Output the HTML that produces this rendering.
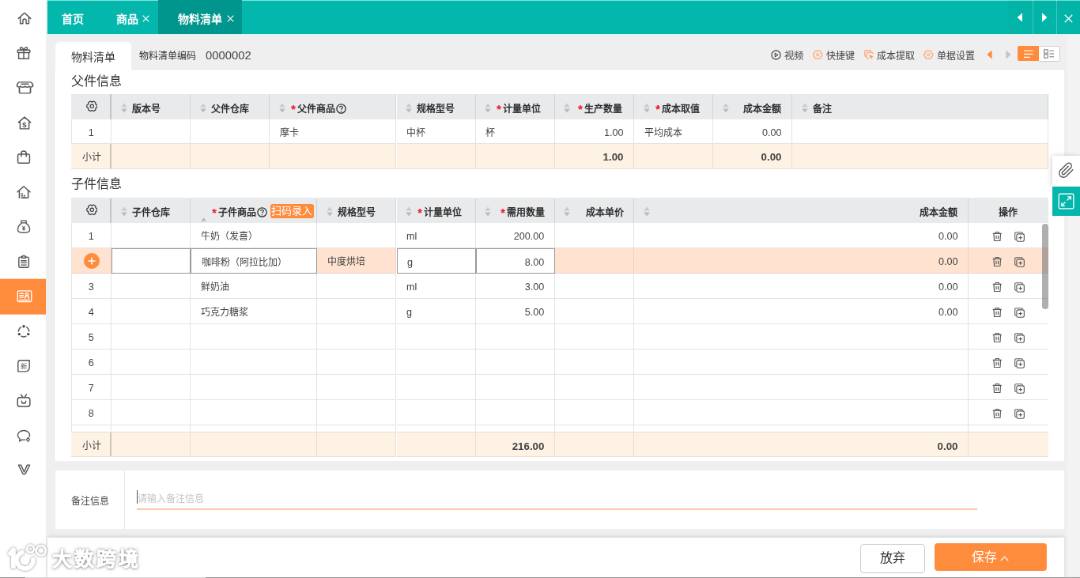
<!DOCTYPE html>
<html lang="zh-CN">
<head>
<meta charset="utf-8">
<title>物料清单</title>
<style>
*{box-sizing:border-box;margin:0;padding:0}
html,body{width:1080px;height:578px;overflow:hidden;background:#efeff0}
body{font-family:"Liberation Sans",sans-serif;font-size:12px;color:#333}
#app{position:absolute;left:0;top:0;width:1366px;height:731px;transform:scale(0.790630);transform-origin:0 0;overflow:hidden;will-change:transform}
.abs{position:absolute}
/* sidebar */
#side{position:absolute;left:0;top:0;width:58.3px;height:731px;background:#fff}
#side .it{position:absolute;left:0;width:58.3px;height:44px;transform:translateY(0.7px)}
#side .it svg{position:absolute;left:20px;top:12px;width:20px;height:20px;overflow:visible}
#side .it.on{background:#ff8b3d}
/* header */
#hdr{position:absolute;left:60px;top:0;width:1306px;height:42.5px;background:#03b7ac;border-top:1px solid #7fe3dc;box-shadow:0 1px 0 #d4f4f1,-1.4px 0 0 #d4f4f1}
#hdr .t{position:absolute;top:13px;height:20px;line-height:20px;font-size:14px;font-weight:700;color:#fff;white-space:nowrap}
#hdr .x{position:absolute;top:18px;width:9px;height:9px}
#hdr .act{position:absolute;left:140px;top:-1px;width:106px;height:42.5px;background:#00968d}
#hdr .nav{position:absolute;top:-1px;height:42.5px;border-left:1px solid rgba(255,255,255,.3)}
/* sub header */
#tab{position:absolute;left:70px;top:53px;width:96px;height:37px;background:#fff;border-radius:6px 6px 0 0;font-size:14px;line-height:20px;padding:9px 0 0 20px;color:#333}
.sub{position:absolute;white-space:nowrap;color:#333}
/* cards */
#card{position:absolute;left:70px;top:88.5px;width:1276px;height:494.8px;background:#fff}
#remark{position:absolute;left:70px;top:594.5px;width:1276px;height:74.5px;background:#fff}
#foot{position:absolute;left:60px;top:680px;width:1286px;height:51px;background:#fff;box-shadow:0 -2px 5px rgba(0,0,0,.10)}
#sbar{position:absolute;left:1350px;top:43.5px;width:17px;height:689px;background:#f3f3f3}
.c{position:absolute;overflow:hidden}
.x{position:absolute;top:1.2px;bottom:0;line-height:32px;white-space:nowrap;font-size:12px;color:#444}
.h .x{color:#2e2e2e}
.h .x{top:3px}
.w{position:absolute;left:-1.5px;right:1.5px;top:0;bottom:0}
.n{font-size:12.6px !important;color:#444;top:1.6px !important}
.ttl{position:absolute;left:20px;font-size:16px;line-height:22px;color:#333;white-space:nowrap}
</style>
</head>
<body>
<div id="app">

<div id="hdr">
  <div class="act"></div>
  <div class="t" style="left:18px">首页</div>
  <div class="t" style="left:87px">商品</div>
  <svg class="x" style="left:120px" viewBox="0 0 9 9"><path d="M0.7 0.7L8.3 8.3M8.3 0.7L0.7 8.3" stroke="#fff" stroke-width="1.2" fill="none"/></svg>
  <div class="t" style="left:165px">物料清单</div>
  <svg class="x" style="left:227px" viewBox="0 0 9 9"><path d="M0.7 0.7L8.3 8.3M8.3 0.7L0.7 8.3" stroke="#fff" stroke-width="1.2" fill="none"/></svg>
  <div class="abs" style="left:1215px;top:-1px;width:91px;height:42.5px;background:rgba(0,0,0,.02)"></div>
  <div class="nav" style="left:1246px"></div>
  <div class="nav" style="left:1276px"></div>
  <svg class="abs" style="left:1226px;top:15px;width:8px;height:12px" viewBox="0 0 8 12"><path d="M7 0.3V11.7L0.6 6Z" fill="#fff"/></svg>
  <svg class="abs" style="left:1257px;top:15px;width:8px;height:12px" viewBox="0 0 8 12"><path d="M1 0.3V11.7L7.4 6Z" fill="#fff"/></svg>
  <svg class="abs" style="left:1286px;top:17px;width:11px;height:11px" viewBox="0 0 11 11"><path d="M0.8 0.8L10.2 10.2M10.2 0.8L0.8 10.2" stroke="#fff" stroke-width="1.3" fill="none"/></svg>
</div>

<div id="side">
<div class="it" style="top:0"><svg style="left:22px;top:14px;width:18px;height:17px" viewBox="0.5 1.5 19 17" fill="none" stroke="#555" stroke-width="1.5" stroke-linecap="round" stroke-linejoin="round"><path d="M1.8 10.2L10 2.6L18.2 10.2"/><path d="M4.3 8.6V17H7.8V13A2.2 2.2 0 0 1 12.2 13V17H15.7V8.6"/></svg></div>
<div class="it" style="top:44px"><svg viewBox="0 0 20 20" fill="none" stroke="#555" stroke-width="1.4" stroke-linejoin="round"><rect x="2.2" y="6.6" width="15.6" height="3.2" rx="0.6"/><path d="M3.6 9.8V17.6H16.4V9.8M10 6.6V17.6"/><path d="M10 6.4C8.6 2.6 5.2 2.4 5.4 4.6C5.6 6.2 8.6 6.4 10 6.4C11.4 6.4 14.4 6.2 14.6 4.6C14.8 2.4 11.4 2.6 10 6.4Z"/></svg></div>
<div class="it" style="top:88px"><svg style="left:20px;top:12px;width:23px;height:20px" viewBox="0.5 0 19 20" preserveAspectRatio="none" fill="none" stroke="#555" stroke-width="1.4" stroke-linejoin="round" stroke-linecap="round"><path d="M4.6 3.2H15.4C16.6 3.2 17.2 4 17.6 5L18.4 7.4C18.4 9.6 15.4 9.9 14.6 8.4C13.8 9.9 10.8 9.9 10 8.4C9.2 9.9 6.2 9.9 5.4 8.4C4.6 9.9 1.6 9.6 1.6 7.4L2.4 5C2.8 4 3.4 3.2 4.6 3.2Z"/><path d="M6.4 5.6H13.6"/><path d="M4.2 10.4V15.6Q4.2 17.2 5.8 17.2H14.2Q15.8 17.2 15.8 15.6V10.4"/></svg></div>
<div class="it" style="top:132px"><svg style="left:20.5px;top:13px" viewBox="0 0 20 20" fill="none" stroke="#555" stroke-width="1.4" stroke-linejoin="round"><path d="M10 2.4L17.8 9.2H15.6V17.2H4.4V9.2H2.2Z"/><text x="10" y="15.2" font-size="9.5" font-weight="bold" text-anchor="middle" fill="#555" stroke="none" font-family="Liberation Sans, sans-serif">$</text></svg></div>
<div class="it" style="top:176px"><svg viewBox="0 0 20 20" fill="none" stroke="#555" stroke-width="1.5" stroke-linejoin="round" stroke-linecap="round"><rect x="2.6" y="6.4" width="14.8" height="11.2" rx="1.6"/><path d="M6.8 9.4V5.6A3.2 3.2 0 0 1 13.2 5.6V9.4"/></svg></div>
<div class="it" style="top:220px"><svg viewBox="0 0 20 20" fill="none" stroke="#555" stroke-width="1.5" stroke-linejoin="round" stroke-linecap="round"><path d="M2 10L10 3L18 10"/><path d="M4.4 8.4V17.6M15.6 8.4V17.6"/><path d="M7.4 12.4H8.2M7.4 15H8.2M10.4 15H11.2M7.4 17.5H14" stroke-width="1.7"/></svg></div>
<div class="it" style="top:264px"><svg viewBox="0 0 20 20" fill="none" stroke="#555" stroke-width="1.4" stroke-linejoin="round"><rect x="6.8" y="2.4" width="6.4" height="2.8" rx="0.7"/><path d="M7.4 5.4C3.2 8 1.8 12.6 2.8 15.4C3.5 17.3 5.4 17.6 10 17.6C14.6 17.6 16.5 17.3 17.2 15.4C18.2 12.6 16.8 8 12.6 5.4"/><path d="M8.2 9L10 11.4L11.8 9M10 11.4V15M8.2 11.8H11.8M8.2 13.4H11.8" stroke-width="1"/></svg></div>
<div class="it" style="top:308px"><svg viewBox="0 0 20 20" fill="none" stroke="#555" stroke-width="1.4" stroke-linejoin="round" stroke-linecap="round"><path d="M7.4 4.4H5.4Q3.8 4.4 3.8 6V16Q3.8 17.6 5.4 17.6H14.6Q16.2 17.6 16.2 16V6Q16.2 4.4 14.6 4.4H12.6"/><path d="M7.4 5.6V3.6H8.8A1.2 1.2 0 0 1 11.2 3.6H12.6V5.6Z"/><path d="M6.8 9H13.2M6.8 11.7H13.2M6.8 14.4H13.2"/></svg></div>
<div class="it on" style="top:352px;height:44.7px"><svg style="left:20.8px" viewBox="0 0 20 20" fill="none" stroke="#fff" stroke-width="1.4" stroke-linejoin="round" stroke-linecap="round"><rect x="1.2" y="3.2" width="17.6" height="13.6" rx="1.4"/><path d="M3.6 14.6H16.4" stroke-width="1.2"/><path d="M4 6.6H8.4M4 9H8.4M4 11.4H8.4"/><circle cx="13" cy="7.4" r="1.7"/><path d="M10.6 12.6V12A2.4 2.4 0 0 1 15.4 12V12.6"/></svg></div>
<div class="it" style="top:396px"><svg viewBox="0 0 20 20" fill="none" stroke="#555" stroke-width="1.4" stroke-linecap="round"><path d="M13.59 5.06A6.6 6.6 0 0 1 16.59 10.25"/><path d="M13 16.48A6.6 6.6 0 0 1 7 16.48"/><path d="M3.41 10.25A6.6 6.6 0 0 1 6.41 5.06"/><circle cx="10" cy="4" r="1.7" fill="#444" stroke="none"/><circle cx="4.3" cy="13.9" r="1.7" fill="#444" stroke="none"/><circle cx="15.7" cy="13.9" r="1.7" fill="#444" stroke="none"/></svg></div>
<div class="it" style="top:440px"><svg viewBox="0 0 20 20" fill="none" stroke="#555" stroke-width="1.4" stroke-linejoin="round"><path d="M5.6 3H17.2V11C17.2 15 14.8 17.2 11.2 17.2H2.8V5.8Q2.8 3 5.6 3Z"/><text x="10" y="13.4" font-size="8.5" text-anchor="middle" fill="#555" stroke="none" font-family="Liberation Sans, sans-serif">新</text></svg></div>
<div class="it" style="top:484px"><svg viewBox="0 0 20 20" fill="none" stroke="#555" stroke-width="1.5" stroke-linejoin="round" stroke-linecap="round"><rect x="2.2" y="6" width="15.6" height="11.6" rx="3"/><path d="M6.6 2.4L8.8 5.8M13.4 2.4L11.2 5.8"/><path d="M7.4 10.4V11.4C7.4 14.4 12.6 14.4 12.6 11.4V10.4" stroke-width="1.3"/></svg></div>
<div class="it" style="top:528px"><svg style="top:13px" viewBox="0 0 20 20" fill="none" stroke="#555" stroke-width="1.4" stroke-linejoin="round"><path d="M12.2 14.4C11.5 14.6 10.8 14.7 10 14.7C9.3 14.7 8.6 14.6 8 14.5L4.6 16.2L5.2 13.4C3.4 12.2 2.4 10.6 2.4 8.8C2.4 5.4 5.8 2.8 10 2.8C14.2 2.8 17.6 5.4 17.6 8.8C17.6 9.6 17.4 10.4 17 11.1"/><path d="M15.4 11.6L17.4 14.2L15.4 16.8L13.4 14.2Z" stroke-width="1.2"/></svg></div>
<div class="it" style="top:572px"><svg style="left:21.5px;top:12.2px;width:17px;height:17px" viewBox="0 0 20 20" fill="none" stroke="#555" stroke-width="1.6" stroke-linejoin="round"><path d="M1.6 4H5.4L10 14.4L14.6 4H18.4L11.6 17.6H8.4Z"/></svg></div>

</div>

<div id="tab">物料清单</div>
<div class="sub" style="left:176px;top:61px;font-size:12px;line-height:20px">物料清单编码</div>
<div class="sub" style="left:260px;top:59.5px;font-size:14.8px;line-height:20px;color:#444">0000002</div>
<svg class="abs" style="left:975.3px;top:63.4px;width:13px;height:13px" viewBox="0 0 13 13"><circle cx="6.5" cy="6.5" r="5.6" fill="none" stroke="#333" stroke-width="1.1"/><path d="M5.2 4.1V8.9L9.1 6.5Z" fill="none" stroke="#333" stroke-width="1" stroke-linejoin="round"/></svg>
<div class="sub" style="color:#444;left:991.5px;top:61px;font-size:12.3px;line-height:20px">视频</div>
<svg class="abs" style="left:1028px;top:63px;width:12.5px;height:12.5px" viewBox="0 0 14 14"><path d="M13.14 5.58 L13.14 8.42 L11.33 9.50 L11.30 11.61 L8.84 13.02 L7.00 12.00 L5.16 13.02 L2.70 11.61 L2.67 9.50 L0.86 8.42 L0.86 5.58 L2.67 4.50 L2.70 2.39 L5.16 0.98 L7.00 2.00 L8.84 0.98 L11.30 2.39 L11.33 4.50Z" fill="none" stroke="#ffb185" stroke-width="1.6" stroke-linejoin="round"/><circle cx="7" cy="7" r="1.7" fill="none" stroke="#ffb185" stroke-width="1.4"/></svg>
<div class="sub" style="color:#444;left:1045px;top:61px;font-size:12px;line-height:20px">快捷键</div>
<svg class="abs" style="left:1093px;top:63px;width:11.5px;height:12px" viewBox="0 0 12 12.5" fill="none" stroke="#ffb185" stroke-width="1.5" stroke-linejoin="round"><path d="M3 8.6H1.9Q0.8 8.6 0.8 7.5V1.9Q0.8 0.8 1.9 0.8H7.9Q9 0.8 9 1.9V2.6"/><path d="M6 11.4H4.6Q3.4 11.4 3.4 10.2V4.6Q3.4 3.4 4.6 3.4H10.2Q11.4 3.4 11.4 4.6V5.6"/><path d="M7 7L11.6 9L9.8 9.8L9 11.6Z" fill="#ff9a56" stroke="#ff9a56" stroke-width="0.9"/></svg>
<div class="sub" style="color:#444;left:1109px;top:61px;font-size:12px;line-height:20px">成本提取</div>
<svg class="abs" style="left:1168px;top:63px;width:12.5px;height:12.5px" viewBox="0 0 14 14"><path d="M13.14 5.58 L13.14 8.42 L11.33 9.50 L11.30 11.61 L8.84 13.02 L7.00 12.00 L5.16 13.02 L2.70 11.61 L2.67 9.50 L0.86 8.42 L0.86 5.58 L2.67 4.50 L2.70 2.39 L5.16 0.98 L7.00 2.00 L8.84 0.98 L11.30 2.39 L11.33 4.50Z" fill="none" stroke="#ffb185" stroke-width="1.6" stroke-linejoin="round"/><circle cx="7" cy="7" r="1.7" fill="none" stroke="#ffb185" stroke-width="1.4"/></svg>
<div class="sub" style="color:#444;left:1185px;top:61px;font-size:12px;line-height:20px">单据设置</div>
<svg class="abs" style="left:1248px;top:63px;width:7px;height:12px" viewBox="0 0 7 12"><path d="M6.6 0.4V11.6L0.4 6Z" fill="#ff8b3d"/></svg>
<svg class="abs" style="left:1272px;top:63px;width:7px;height:12px" viewBox="0 0 7 12"><path d="M0.4 0.4V11.6L6.6 6Z" fill="#c4c4c4"/></svg>
<div class="abs" style="left:1287px;top:58px;width:27px;height:19px;background:#ff8b3d;border-radius:2px 0 0 2px"></div>
<svg class="abs" style="left:1294px;top:62.5px;width:13px;height:11px" viewBox="0 0 13 11"><path d="M1 1.2H12.5M1 5.3H12.5M1 9.4H8.6" stroke="#fff" stroke-width="1.3"/></svg>
<div class="abs" style="left:1314px;top:57.5px;width:26.5px;height:20.5px;background:#fff;border:1px solid #cdcdcd;border-left:none;border-radius:0 2px 2px 0"></div>
<svg class="abs" style="left:1320px;top:61.5px;width:14px;height:12px" viewBox="0 0 14 12" fill="none" stroke="#777" stroke-width="1"><rect x="0.6" y="0.8" width="4.6" height="4.4"/><rect x="0.6" y="6.8" width="4.6" height="4.4"/><path d="M7.4 2.2H13M7.4 6H13M7.4 9.8H13"/></svg>


<div id="card">
  <div class="ttl" style="top:3px">父件信息</div>
<div class="c h" style="left:20px;top:30.5px;width:51.3px;height:31.5px;background:#e8eaec;"><svg class="abs" style="left:18.5px;top:8px;width:14.6px;height:14.6px" viewBox="0 0 14 14"><path d="M13.14 5.58 L13.14 8.42 L11.33 9.50 L11.30 11.61 L8.84 13.02 L7.00 12.00 L5.16 13.02 L2.70 11.61 L2.67 9.50 L0.86 8.42 L0.86 5.58 L2.67 4.50 L2.70 2.39 L5.16 0.98 L7.00 2.00 L8.84 0.98 L11.30 2.39 L11.33 4.50Z" fill="none" stroke="#3a3a3a" stroke-width="1.2" stroke-linejoin="round"/><circle cx="7" cy="7" r="2.1" fill="none" stroke="#3a3a3a" stroke-width="1.1"/></svg><span class="abs" style="left:48.7px;top:0;bottom:0;width:2.6px;background:#c2c4c8"></span></div>
<div class="c h" style="left:71.3px;top:30.5px;width:100px;height:31.5px;background:#e8eaec;border-right:1px solid #d3d5d8;"><div class="w"><svg class="abs" style="left:13px;top:11px;width:8px;height:13px" viewBox="0 0 8 13"><path d="M4 0.6L7.7 5.4H0.3Z" fill="#c9cbcf"/><path d="M4 12.4L7.7 7.6H0.3Z" fill="#b9bcc1"/></svg><span class="x" style="left:27px;font-weight:bold;">版本号</span></div></div>
<div class="c h" style="left:171.3px;top:30.5px;width:100px;height:31.5px;background:#e8eaec;border-right:1px solid #d3d5d8;"><div class="w"><svg class="abs" style="left:13px;top:11px;width:8px;height:13px" viewBox="0 0 8 13"><path d="M4 0.6L7.7 5.4H0.3Z" fill="#c9cbcf"/><path d="M4 12.4L7.7 7.6H0.3Z" fill="#b9bcc1"/></svg><span class="x" style="left:27px;font-weight:bold;">父件仓库</span></div></div>
<div class="c h" style="left:271.3px;top:30.5px;width:160.2px;height:31.5px;background:#e8eaec;border-right:1px solid #d3d5d8;"><div class="w"><svg class="abs" style="left:13px;top:11px;width:8px;height:13px" viewBox="0 0 8 13"><path d="M4 0.6L7.7 5.4H0.3Z" fill="#c9cbcf"/><path d="M4 12.4L7.7 7.6H0.3Z" fill="#b9bcc1"/></svg><svg class="abs" style="left:27px;top:13px;width:8px;height:8px" viewBox="0 0 8 8"><path d="M4.00 3.90L4.00 1.00M4.00 3.90L6.76 3.00M4.00 3.90L5.70 6.25M4.00 3.90L2.30 6.25M4.00 3.90L1.24 3.00" stroke="#f5222d" stroke-width="1.6" fill="none"/></svg><span class="x" style="left:36px;font-weight:bold;">父件商品</span><svg class="abs" style="left:85px;top:12px;width:13px;height:13px" viewBox="0 0 12 12"><circle cx="6" cy="6" r="5.2" fill="none" stroke="#333" stroke-width="1.2"/><path d="M4.3 4.7C4.3 3.6 5 3 6 3C7 3 7.7 3.6 7.7 4.5C7.7 5.6 6 5.8 6 7.2" fill="none" stroke="#333" stroke-width="1.1"/><circle cx="6" cy="9" r="0.7" fill="#333"/></svg></div></div>
<div class="c h" style="left:431.5px;top:30.5px;width:100.2px;height:31.5px;background:#e8eaec;border-right:1px solid #d3d5d8;"><div class="w"><svg class="abs" style="left:13px;top:11px;width:8px;height:13px" viewBox="0 0 8 13"><path d="M4 0.6L7.7 5.4H0.3Z" fill="#c9cbcf"/><path d="M4 12.4L7.7 7.6H0.3Z" fill="#b9bcc1"/></svg><span class="x" style="left:27px;font-weight:bold;">规格型号</span></div></div>
<div class="c h" style="left:531.7px;top:30.5px;width:100.2px;height:31.5px;background:#e8eaec;border-right:1px solid #d3d5d8;"><div class="w"><svg class="abs" style="left:13px;top:11px;width:8px;height:13px" viewBox="0 0 8 13"><path d="M4 0.6L7.7 5.4H0.3Z" fill="#c9cbcf"/><path d="M4 12.4L7.7 7.6H0.3Z" fill="#b9bcc1"/></svg><svg class="abs" style="left:27px;top:13px;width:8px;height:8px" viewBox="0 0 8 8"><path d="M4.00 3.90L4.00 1.00M4.00 3.90L6.76 3.00M4.00 3.90L5.70 6.25M4.00 3.90L2.30 6.25M4.00 3.90L1.24 3.00" stroke="#f5222d" stroke-width="1.6" fill="none"/></svg><span class="x" style="left:36px;font-weight:bold;">计量单位</span></div></div>
<div class="c h" style="left:631.9px;top:30.5px;width:100.1px;height:31.5px;background:#e8eaec;border-right:1px solid #d3d5d8;"><div class="w"><svg class="abs" style="left:13px;top:11px;width:8px;height:13px" viewBox="0 0 8 13"><path d="M4 0.6L7.7 5.4H0.3Z" fill="#c9cbcf"/><path d="M4 12.4L7.7 7.6H0.3Z" fill="#b9bcc1"/></svg><span class="x" style="right:12px;font-weight:bold;">生产数量</span><svg class="abs" style="right:61px;top:13px;width:8px;height:8px" viewBox="0 0 8 8"><path d="M4.00 3.90L4.00 1.00M4.00 3.90L6.76 3.00M4.00 3.90L5.70 6.25M4.00 3.90L2.30 6.25M4.00 3.90L1.24 3.00" stroke="#f5222d" stroke-width="1.6" fill="none"/></svg></div></div>
<div class="c h" style="left:732px;top:30.5px;width:100px;height:31.5px;background:#e8eaec;border-right:1px solid #d3d5d8;"><div class="w"><svg class="abs" style="left:13px;top:11px;width:8px;height:13px" viewBox="0 0 8 13"><path d="M4 0.6L7.7 5.4H0.3Z" fill="#c9cbcf"/><path d="M4 12.4L7.7 7.6H0.3Z" fill="#b9bcc1"/></svg><svg class="abs" style="left:27px;top:13px;width:8px;height:8px" viewBox="0 0 8 8"><path d="M4.00 3.90L4.00 1.00M4.00 3.90L6.76 3.00M4.00 3.90L5.70 6.25M4.00 3.90L2.30 6.25M4.00 3.90L1.24 3.00" stroke="#f5222d" stroke-width="1.6" fill="none"/></svg><span class="x" style="left:36px;font-weight:bold;">成本取值</span></div></div>
<div class="c h" style="left:832px;top:30.5px;width:100px;height:31.5px;background:#e8eaec;border-right:1px solid #d3d5d8;"><div class="w"><svg class="abs" style="left:13px;top:11px;width:8px;height:13px" viewBox="0 0 8 13"><path d="M4 0.6L7.7 5.4H0.3Z" fill="#c9cbcf"/><path d="M4 12.4L7.7 7.6H0.3Z" fill="#b9bcc1"/></svg><span class="x" style="right:12px;font-weight:bold;">成本金额</span></div></div>
<div class="c h" style="left:932px;top:30.5px;width:324px;height:31.5px;background:#e8eaec;border-right:1px solid #d3d5d8;"><div class="w"><svg class="abs" style="left:13px;top:11px;width:8px;height:13px" viewBox="0 0 8 13"><path d="M4 0.6L7.7 5.4H0.3Z" fill="#c9cbcf"/><path d="M4 12.4L7.7 7.6H0.3Z" fill="#b9bcc1"/></svg><span class="x" style="left:27px;font-weight:bold;">备注</span></div></div>
<div class="c" style="left:20px;top:62px;width:51.3px;height:31.3px;background:#fff;border-right:1px solid #e4e4e4;border-bottom:1px solid #e4e4e4;"><span class="x n" style="left:0;right:0;text-align:center;">1</span></div>
<div class="c" style="left:71.3px;top:62px;width:100px;height:31.3px;background:#fff;border-right:1px solid #e4e4e4;border-bottom:1px solid #e4e4e4;"></div>
<div class="c" style="left:171.3px;top:62px;width:100px;height:31.3px;background:#fff;border-right:1px solid #e4e4e4;border-bottom:1px solid #e4e4e4;"></div>
<div class="c" style="left:271.3px;top:62px;width:160.2px;height:31.3px;background:#fff;border-right:1px solid #e4e4e4;border-bottom:1px solid #e4e4e4;"><div class="w"><span class="x" style="left:14px;">摩卡</span></div></div>
<div class="c" style="left:431.5px;top:62px;width:100.2px;height:31.3px;background:#fff;border-right:1px solid #e4e4e4;border-bottom:1px solid #e4e4e4;"><div class="w"><span class="x" style="left:14px;">中杯</span></div></div>
<div class="c" style="left:531.7px;top:62px;width:100.2px;height:31.3px;background:#fff;border-right:1px solid #e4e4e4;border-bottom:1px solid #e4e4e4;"><div class="w"><span class="x" style="left:14px;">杯</span></div></div>
<div class="c" style="left:631.9px;top:62px;width:100.1px;height:31.3px;background:#fff;border-right:1px solid #e4e4e4;border-bottom:1px solid #e4e4e4;"><div class="w"><span class="x n" style="right:11px;">1.00</span></div></div>
<div class="c" style="left:732px;top:62px;width:100px;height:31.3px;background:#fff;border-right:1px solid #e4e4e4;border-bottom:1px solid #e4e4e4;"><div class="w"><span class="x" style="left:14px;">平均成本</span></div></div>
<div class="c" style="left:832px;top:62px;width:100px;height:31.3px;background:#fff;border-right:1px solid #e4e4e4;border-bottom:1px solid #e4e4e4;"><div class="w"><span class="x n" style="right:11px;">0.00</span></div></div>
<div class="c" style="left:932px;top:62px;width:324px;height:31.3px;background:#fff;border-right:1px solid #e4e4e4;border-bottom:1px solid #e4e4e4;"></div>
<div class="abs" style="left:20px;top:62px;width:1px;height:31.3px;background:#e4e4e4"></div>
<div class="c" style="left:20px;top:93.3px;width:51.3px;height:32.7px;background:#fef2e5;border-bottom:1px solid #eadfd3;"><span class="x" style="left:0;right:0;text-align:center;">小计</span><span class="abs" style="left:49px;top:0;bottom:0;width:2.2px;background:#cfc5ba"></span></div>
<div class="c" style="left:71.3px;top:93.3px;width:100px;height:32.7px;background:#fef2e5;border-right:1px solid #eadfd3;border-bottom:1px solid #eadfd3;"></div>
<div class="c" style="left:171.3px;top:93.3px;width:100px;height:32.7px;background:#fef2e5;border-right:1px solid #eadfd3;border-bottom:1px solid #eadfd3;"></div>
<div class="c" style="left:271.3px;top:93.3px;width:160.2px;height:32.7px;background:#fef2e5;border-right:1px solid #eadfd3;border-bottom:1px solid #eadfd3;"></div>
<div class="c" style="left:431.5px;top:93.3px;width:100.2px;height:32.7px;background:#fef2e5;border-right:1px solid #eadfd3;border-bottom:1px solid #eadfd3;"></div>
<div class="c" style="left:531.7px;top:93.3px;width:100.2px;height:32.7px;background:#fef2e5;border-right:1px solid #eadfd3;border-bottom:1px solid #eadfd3;"></div>
<div class="c" style="left:631.9px;top:93.3px;width:100.1px;height:32.7px;background:#fef2e5;border-right:1px solid #eadfd3;border-bottom:1px solid #eadfd3;"><div class="w"><span class="x n" style="right:11px;font-weight:bold;font-size:13.3px !important;">1.00</span></div></div>
<div class="c" style="left:732px;top:93.3px;width:100px;height:32.7px;background:#fef2e5;border-right:1px solid #eadfd3;border-bottom:1px solid #eadfd3;"></div>
<div class="c" style="left:832px;top:93.3px;width:100px;height:32.7px;background:#fef2e5;border-right:1px solid #eadfd3;border-bottom:1px solid #eadfd3;"><div class="w"><span class="x n" style="right:11px;font-weight:bold;font-size:13.3px !important;">0.00</span></div></div>
<div class="c" style="left:932px;top:93.3px;width:324px;height:32.7px;background:#fef2e5;border-right:1px solid #eadfd3;border-bottom:1px solid #eadfd3;"></div>
  <div class="ttl" style="top:133px">子件信息</div>
<div class="c h" style="left:20px;top:161.8px;width:51.3px;height:31.5px;background:#e8eaec;"><svg class="abs" style="left:18.5px;top:8px;width:14.6px;height:14.6px" viewBox="0 0 14 14"><path d="M13.14 5.58 L13.14 8.42 L11.33 9.50 L11.30 11.61 L8.84 13.02 L7.00 12.00 L5.16 13.02 L2.70 11.61 L2.67 9.50 L0.86 8.42 L0.86 5.58 L2.67 4.50 L2.70 2.39 L5.16 0.98 L7.00 2.00 L8.84 0.98 L11.30 2.39 L11.33 4.50Z" fill="none" stroke="#3a3a3a" stroke-width="1.2" stroke-linejoin="round"/><circle cx="7" cy="7" r="2.1" fill="none" stroke="#3a3a3a" stroke-width="1.1"/></svg><span class="abs" style="left:48.7px;top:0;bottom:0;width:2.6px;background:#c2c4c8"></span></div>
<div class="c h" style="left:71.3px;top:161.8px;width:100px;height:31.5px;background:#e8eaec;border-right:1px solid #d3d5d8;"><div class="w"><svg class="abs" style="left:13px;top:11px;width:8px;height:13px" viewBox="0 0 8 13"><path d="M4 0.6L7.7 5.4H0.3Z" fill="#c9cbcf"/><path d="M4 12.4L7.7 7.6H0.3Z" fill="#b9bcc1"/></svg><span class="x" style="left:27px;font-weight:bold;">子件仓库</span></div></div>
<div class="c h" style="left:171.3px;top:161.8px;width:160.1px;height:31.5px;background:#e8eaec;border-right:1px solid #d3d5d8;"><div class="w"><svg class="abs" style="left:14px;top:25px;width:7px;height:5px" viewBox="0 0 7 5"><path d="M3.5 0.3L6.8 4.7H0.2Z" fill="#b5b7bb"/></svg><svg class="abs" style="left:27px;top:13px;width:8px;height:8px" viewBox="0 0 8 8"><path d="M4.00 3.90L4.00 1.00M4.00 3.90L6.76 3.00M4.00 3.90L5.70 6.25M4.00 3.90L2.30 6.25M4.00 3.90L1.24 3.00" stroke="#f5222d" stroke-width="1.6" fill="none"/></svg><span class="x" style="left:36px;font-weight:bold;">子件商品</span><svg class="abs" style="left:85px;top:12px;width:13px;height:13px" viewBox="0 0 12 12"><circle cx="6" cy="6" r="5.2" fill="none" stroke="#333" stroke-width="1.2"/><path d="M4.3 4.7C4.3 3.6 5 3 6 3C7 3 7.7 3.6 7.7 4.5C7.7 5.6 6 5.8 6 7.2" fill="none" stroke="#333" stroke-width="1.1"/><circle cx="6" cy="9" r="0.7" fill="#333"/></svg><span class="abs" style="left:102px;top:8px;width:55px;height:18px;border-radius:3px;background:#ff8b3d;color:#fff;font-size:13px;line-height:18px;text-align:center">扫码录入</span></div></div>
<div class="c h" style="left:331.4px;top:161.8px;width:100.1px;height:31.5px;background:#e8eaec;border-right:1px solid #d3d5d8;"><div class="w"><svg class="abs" style="left:13px;top:11px;width:8px;height:13px" viewBox="0 0 8 13"><path d="M4 0.6L7.7 5.4H0.3Z" fill="#c9cbcf"/><path d="M4 12.4L7.7 7.6H0.3Z" fill="#b9bcc1"/></svg><span class="x" style="left:27px;font-weight:bold;">规格型号</span></div></div>
<div class="c h" style="left:431.5px;top:161.8px;width:100.2px;height:31.5px;background:#e8eaec;border-right:1px solid #d3d5d8;"><div class="w"><svg class="abs" style="left:13px;top:11px;width:8px;height:13px" viewBox="0 0 8 13"><path d="M4 0.6L7.7 5.4H0.3Z" fill="#c9cbcf"/><path d="M4 12.4L7.7 7.6H0.3Z" fill="#b9bcc1"/></svg><svg class="abs" style="left:27px;top:13px;width:8px;height:8px" viewBox="0 0 8 8"><path d="M4.00 3.90L4.00 1.00M4.00 3.90L6.76 3.00M4.00 3.90L5.70 6.25M4.00 3.90L2.30 6.25M4.00 3.90L1.24 3.00" stroke="#f5222d" stroke-width="1.6" fill="none"/></svg><span class="x" style="left:36px;font-weight:bold;">计量单位</span></div></div>
<div class="c h" style="left:531.7px;top:161.8px;width:100.2px;height:31.5px;background:#e8eaec;border-right:1px solid #d3d5d8;"><div class="w"><svg class="abs" style="left:13px;top:11px;width:8px;height:13px" viewBox="0 0 8 13"><path d="M4 0.6L7.7 5.4H0.3Z" fill="#c9cbcf"/><path d="M4 12.4L7.7 7.6H0.3Z" fill="#b9bcc1"/></svg><span class="x" style="right:10.8px;font-weight:bold;">需用数量</span><svg class="abs" style="right:59.8px;top:13px;width:8px;height:8px" viewBox="0 0 8 8"><path d="M4.00 3.90L4.00 1.00M4.00 3.90L6.76 3.00M4.00 3.90L5.70 6.25M4.00 3.90L2.30 6.25M4.00 3.90L1.24 3.00" stroke="#f5222d" stroke-width="1.6" fill="none"/></svg></div></div>
<div class="c h" style="left:631.9px;top:161.8px;width:100.1px;height:31.5px;background:#e8eaec;border-right:1px solid #d3d5d8;"><div class="w"><svg class="abs" style="left:13px;top:11px;width:8px;height:13px" viewBox="0 0 8 13"><path d="M4 0.6L7.7 5.4H0.3Z" fill="#c9cbcf"/><path d="M4 12.4L7.7 7.6H0.3Z" fill="#b9bcc1"/></svg><span class="x" style="right:10.8px;font-weight:bold;">成本单价</span></div></div>
<div class="c h" style="left:732px;top:161.8px;width:422.5px;height:31.5px;background:#e8eaec;border-right:1px solid #d3d5d8;"><div class="w"><svg class="abs" style="left:13px;top:11px;width:8px;height:13px" viewBox="0 0 8 13"><path d="M4 0.6L7.7 5.4H0.3Z" fill="#c9cbcf"/><path d="M4 12.4L7.7 7.6H0.3Z" fill="#b9bcc1"/></svg><span class="x" style="right:11.5px;font-weight:bold;">成本金额</span></div></div>
<div class="c h" style="left:1154.5px;top:161.8px;width:101.5px;height:31.5px;background:#e8eaec;"><div class="w"><span class="x" style="left:2.5px;right:0;text-align:center;font-weight:bold">操作</span></div></div>
<div class="c" style="left:20px;top:193.3px;width:51.3px;height:32px;background:#fff;border-right:1px solid #e4e4e4;border-bottom:1px solid #e4e4e4;"><span class="x n" style="left:0;right:0;text-align:center;">1</span></div>
<div class="c" style="left:71.3px;top:193.3px;width:100px;height:32px;background:#fff;border-right:1px solid #e4e4e4;border-bottom:1px solid #e4e4e4;"></div>
<div class="c" style="left:171.3px;top:193.3px;width:160.1px;height:32px;background:#fff;border-right:1px solid #e4e4e4;border-bottom:1px solid #e4e4e4;"><div class="w"><span class="x" style="left:14px;">牛奶（发喜）</span></div></div>
<div class="c" style="left:331.4px;top:193.3px;width:100.1px;height:32px;background:#fff;border-right:1px solid #e4e4e4;border-bottom:1px solid #e4e4e4;"></div>
<div class="c" style="left:431.5px;top:193.3px;width:100.2px;height:32px;background:#fff;border-right:1px solid #e4e4e4;border-bottom:1px solid #e4e4e4;"><div class="w"><span class="x n" style="left:14px;">ml</span></div></div>
<div class="c" style="left:531.7px;top:193.3px;width:100.2px;height:32px;background:#fff;border-right:1px solid #e4e4e4;border-bottom:1px solid #e4e4e4;"><div class="w"><span class="x n" style="right:11px;">200.00</span></div></div>
<div class="c" style="left:631.9px;top:193.3px;width:100.1px;height:32px;background:#fff;border-right:1px solid #e4e4e4;border-bottom:1px solid #e4e4e4;"></div>
<div class="c" style="left:732px;top:193.3px;width:422.5px;height:32px;background:#fff;border-right:1px solid #e4e4e4;border-bottom:1px solid #e4e4e4;"><div class="w"><span class="x n" style="right:10.5px;">0.00</span></div></div>
<div class="c" style="left:1154.5px;top:193.3px;width:101.5px;height:32px;background:#fff;border-bottom:1px solid #e4e4e4;"><div class="w"><svg class="abs" style="left:31.5px;top:10.2px;width:12.5px;height:13.5px" viewBox="0 0 12 13"><path d="M0.7 3.3H11.3M4 3.1V1.4H8V3.1M1.9 3.5L2.4 12H9.6L10.1 3.5M4.8 5.6V9.8M7.2 5.6V9.8" fill="none" stroke="#555" stroke-width="1.1" stroke-linejoin="round"/></svg><svg class="abs" style="left:60.3px;top:10.9px;width:13px;height:13px" viewBox="0 0 13 13"><rect x="2.9" y="2.9" width="9.4" height="9.4" rx="1.7" fill="none" stroke="#555" stroke-width="1.1"/><path d="M2.3 10.4H2.1A1.4 1.4 0 0 1 0.7 9V2.1A1.4 1.4 0 0 1 2.1 0.7H9A1.4 1.4 0 0 1 10.4 2.1V2.3" fill="none" stroke="#555" stroke-width="1.05"/><path d="M7.6 5.4V9.8M5.4 7.6H9.8" fill="none" stroke="#555" stroke-width="1.1"/></svg></div></div>
<div class="c" style="left:20px;top:225.3px;width:51.3px;height:32px;background:#ffe2d0;border-right:1px solid #f0d3c2;border-bottom:1px solid #f0d3c2;"><span class="abs" style="left:16px;top:6px;width:20px;height:20px;border-radius:10px;background:#ff8b3d"></span><svg class="abs" style="left:21px;top:11px;width:10px;height:10px" viewBox="0 0 10 10"><path d="M5 0.5V9.5M0.5 5H9.5" stroke="#fff" stroke-width="1.5"/></svg></div>
<div class="c" style="left:71.3px;top:225.3px;width:100px;height:32px;background:#fff;border:1px solid #9a9a9a;"></div>
<div class="c" style="left:171.3px;top:225.3px;width:160.1px;height:32px;background:#fff;border:1px solid #9a9a9a;"><div class="w"><span class="x" style="left:14px;">咖啡粉（阿拉比加）</span></div></div>
<div class="c" style="left:331.4px;top:225.3px;width:100.1px;height:32px;background:#ffe2d0;border-right:1px solid #f0d3c2;border-bottom:1px solid #f0d3c2;"><div class="w"><span class="x" style="left:14px;">中度烘培</span></div></div>
<div class="c" style="left:431.5px;top:225.3px;width:100.2px;height:32px;background:#fff;border:1px solid #9a9a9a;"><div class="w"><span class="x n" style="left:14px;">g</span></div></div>
<div class="c" style="left:531.7px;top:225.3px;width:100.2px;height:32px;background:#fff;border:1px solid #9a9a9a;"><div class="w"><span class="x n" style="right:11px;">8.00</span></div></div>
<div class="c" style="left:631.9px;top:225.3px;width:100.1px;height:32px;background:#ffe2d0;border-right:1px solid #f0d3c2;border-bottom:1px solid #f0d3c2;"></div>
<div class="c" style="left:732px;top:225.3px;width:422.5px;height:32px;background:#ffe2d0;border-right:1px solid #f0d3c2;border-bottom:1px solid #f0d3c2;"><div class="w"><span class="x n" style="right:10.5px;">0.00</span></div></div>
<div class="c" style="left:1154.5px;top:225.3px;width:101.5px;height:32px;background:#ffe2d0;border-bottom:1px solid #f0d3c2;"><div class="w"><svg class="abs" style="left:31.5px;top:10.2px;width:12.5px;height:13.5px" viewBox="0 0 12 13"><path d="M0.7 3.3H11.3M4 3.1V1.4H8V3.1M1.9 3.5L2.4 12H9.6L10.1 3.5M4.8 5.6V9.8M7.2 5.6V9.8" fill="none" stroke="#555" stroke-width="1.1" stroke-linejoin="round"/></svg><svg class="abs" style="left:60.3px;top:10.9px;width:13px;height:13px" viewBox="0 0 13 13"><rect x="2.9" y="2.9" width="9.4" height="9.4" rx="1.7" fill="none" stroke="#555" stroke-width="1.1"/><path d="M2.3 10.4H2.1A1.4 1.4 0 0 1 0.7 9V2.1A1.4 1.4 0 0 1 2.1 0.7H9A1.4 1.4 0 0 1 10.4 2.1V2.3" fill="none" stroke="#555" stroke-width="1.05"/><path d="M7.6 5.4V9.8M5.4 7.6H9.8" fill="none" stroke="#555" stroke-width="1.1"/></svg></div></div>
<div class="c" style="left:20px;top:257.3px;width:51.3px;height:32px;background:#fff;border-right:1px solid #e4e4e4;border-bottom:1px solid #e4e4e4;"><span class="x n" style="left:0;right:0;text-align:center;">3</span></div>
<div class="c" style="left:71.3px;top:257.3px;width:100px;height:32px;background:#fff;border-right:1px solid #e4e4e4;border-bottom:1px solid #e4e4e4;"></div>
<div class="c" style="left:171.3px;top:257.3px;width:160.1px;height:32px;background:#fff;border-right:1px solid #e4e4e4;border-bottom:1px solid #e4e4e4;"><div class="w"><span class="x" style="left:14px;">鲜奶油</span></div></div>
<div class="c" style="left:331.4px;top:257.3px;width:100.1px;height:32px;background:#fff;border-right:1px solid #e4e4e4;border-bottom:1px solid #e4e4e4;"></div>
<div class="c" style="left:431.5px;top:257.3px;width:100.2px;height:32px;background:#fff;border-right:1px solid #e4e4e4;border-bottom:1px solid #e4e4e4;"><div class="w"><span class="x n" style="left:14px;">ml</span></div></div>
<div class="c" style="left:531.7px;top:257.3px;width:100.2px;height:32px;background:#fff;border-right:1px solid #e4e4e4;border-bottom:1px solid #e4e4e4;"><div class="w"><span class="x n" style="right:11px;">3.00</span></div></div>
<div class="c" style="left:631.9px;top:257.3px;width:100.1px;height:32px;background:#fff;border-right:1px solid #e4e4e4;border-bottom:1px solid #e4e4e4;"></div>
<div class="c" style="left:732px;top:257.3px;width:422.5px;height:32px;background:#fff;border-right:1px solid #e4e4e4;border-bottom:1px solid #e4e4e4;"><div class="w"><span class="x n" style="right:10.5px;">0.00</span></div></div>
<div class="c" style="left:1154.5px;top:257.3px;width:101.5px;height:32px;background:#fff;border-bottom:1px solid #e4e4e4;"><div class="w"><svg class="abs" style="left:31.5px;top:10.2px;width:12.5px;height:13.5px" viewBox="0 0 12 13"><path d="M0.7 3.3H11.3M4 3.1V1.4H8V3.1M1.9 3.5L2.4 12H9.6L10.1 3.5M4.8 5.6V9.8M7.2 5.6V9.8" fill="none" stroke="#555" stroke-width="1.1" stroke-linejoin="round"/></svg><svg class="abs" style="left:60.3px;top:10.9px;width:13px;height:13px" viewBox="0 0 13 13"><rect x="2.9" y="2.9" width="9.4" height="9.4" rx="1.7" fill="none" stroke="#555" stroke-width="1.1"/><path d="M2.3 10.4H2.1A1.4 1.4 0 0 1 0.7 9V2.1A1.4 1.4 0 0 1 2.1 0.7H9A1.4 1.4 0 0 1 10.4 2.1V2.3" fill="none" stroke="#555" stroke-width="1.05"/><path d="M7.6 5.4V9.8M5.4 7.6H9.8" fill="none" stroke="#555" stroke-width="1.1"/></svg></div></div>
<div class="c" style="left:20px;top:289.3px;width:51.3px;height:32px;background:#fff;border-right:1px solid #e4e4e4;border-bottom:1px solid #e4e4e4;"><span class="x n" style="left:0;right:0;text-align:center;">4</span></div>
<div class="c" style="left:71.3px;top:289.3px;width:100px;height:32px;background:#fff;border-right:1px solid #e4e4e4;border-bottom:1px solid #e4e4e4;"></div>
<div class="c" style="left:171.3px;top:289.3px;width:160.1px;height:32px;background:#fff;border-right:1px solid #e4e4e4;border-bottom:1px solid #e4e4e4;"><div class="w"><span class="x" style="left:14px;">巧克力糖浆</span></div></div>
<div class="c" style="left:331.4px;top:289.3px;width:100.1px;height:32px;background:#fff;border-right:1px solid #e4e4e4;border-bottom:1px solid #e4e4e4;"></div>
<div class="c" style="left:431.5px;top:289.3px;width:100.2px;height:32px;background:#fff;border-right:1px solid #e4e4e4;border-bottom:1px solid #e4e4e4;"><div class="w"><span class="x n" style="left:14px;">g</span></div></div>
<div class="c" style="left:531.7px;top:289.3px;width:100.2px;height:32px;background:#fff;border-right:1px solid #e4e4e4;border-bottom:1px solid #e4e4e4;"><div class="w"><span class="x n" style="right:11px;">5.00</span></div></div>
<div class="c" style="left:631.9px;top:289.3px;width:100.1px;height:32px;background:#fff;border-right:1px solid #e4e4e4;border-bottom:1px solid #e4e4e4;"></div>
<div class="c" style="left:732px;top:289.3px;width:422.5px;height:32px;background:#fff;border-right:1px solid #e4e4e4;border-bottom:1px solid #e4e4e4;"><div class="w"><span class="x n" style="right:10.5px;">0.00</span></div></div>
<div class="c" style="left:1154.5px;top:289.3px;width:101.5px;height:32px;background:#fff;border-bottom:1px solid #e4e4e4;"><div class="w"><svg class="abs" style="left:31.5px;top:10.2px;width:12.5px;height:13.5px" viewBox="0 0 12 13"><path d="M0.7 3.3H11.3M4 3.1V1.4H8V3.1M1.9 3.5L2.4 12H9.6L10.1 3.5M4.8 5.6V9.8M7.2 5.6V9.8" fill="none" stroke="#555" stroke-width="1.1" stroke-linejoin="round"/></svg><svg class="abs" style="left:60.3px;top:10.9px;width:13px;height:13px" viewBox="0 0 13 13"><rect x="2.9" y="2.9" width="9.4" height="9.4" rx="1.7" fill="none" stroke="#555" stroke-width="1.1"/><path d="M2.3 10.4H2.1A1.4 1.4 0 0 1 0.7 9V2.1A1.4 1.4 0 0 1 2.1 0.7H9A1.4 1.4 0 0 1 10.4 2.1V2.3" fill="none" stroke="#555" stroke-width="1.05"/><path d="M7.6 5.4V9.8M5.4 7.6H9.8" fill="none" stroke="#555" stroke-width="1.1"/></svg></div></div>
<div class="c" style="left:20px;top:321.3px;width:51.3px;height:32px;background:#fff;border-right:1px solid #e4e4e4;border-bottom:1px solid #e4e4e4;"><span class="x n" style="left:0;right:0;text-align:center;">5</span></div>
<div class="c" style="left:71.3px;top:321.3px;width:100px;height:32px;background:#fff;border-right:1px solid #e4e4e4;border-bottom:1px solid #e4e4e4;"></div>
<div class="c" style="left:171.3px;top:321.3px;width:160.1px;height:32px;background:#fff;border-right:1px solid #e4e4e4;border-bottom:1px solid #e4e4e4;"></div>
<div class="c" style="left:331.4px;top:321.3px;width:100.1px;height:32px;background:#fff;border-right:1px solid #e4e4e4;border-bottom:1px solid #e4e4e4;"></div>
<div class="c" style="left:431.5px;top:321.3px;width:100.2px;height:32px;background:#fff;border-right:1px solid #e4e4e4;border-bottom:1px solid #e4e4e4;"></div>
<div class="c" style="left:531.7px;top:321.3px;width:100.2px;height:32px;background:#fff;border-right:1px solid #e4e4e4;border-bottom:1px solid #e4e4e4;"></div>
<div class="c" style="left:631.9px;top:321.3px;width:100.1px;height:32px;background:#fff;border-right:1px solid #e4e4e4;border-bottom:1px solid #e4e4e4;"></div>
<div class="c" style="left:732px;top:321.3px;width:422.5px;height:32px;background:#fff;border-right:1px solid #e4e4e4;border-bottom:1px solid #e4e4e4;"></div>
<div class="c" style="left:1154.5px;top:321.3px;width:101.5px;height:32px;background:#fff;border-bottom:1px solid #e4e4e4;"><div class="w"><svg class="abs" style="left:31.5px;top:10.2px;width:12.5px;height:13.5px" viewBox="0 0 12 13"><path d="M0.7 3.3H11.3M4 3.1V1.4H8V3.1M1.9 3.5L2.4 12H9.6L10.1 3.5M4.8 5.6V9.8M7.2 5.6V9.8" fill="none" stroke="#555" stroke-width="1.1" stroke-linejoin="round"/></svg><svg class="abs" style="left:60.3px;top:10.9px;width:13px;height:13px" viewBox="0 0 13 13"><rect x="2.9" y="2.9" width="9.4" height="9.4" rx="1.7" fill="none" stroke="#555" stroke-width="1.1"/><path d="M2.3 10.4H2.1A1.4 1.4 0 0 1 0.7 9V2.1A1.4 1.4 0 0 1 2.1 0.7H9A1.4 1.4 0 0 1 10.4 2.1V2.3" fill="none" stroke="#555" stroke-width="1.05"/><path d="M7.6 5.4V9.8M5.4 7.6H9.8" fill="none" stroke="#555" stroke-width="1.1"/></svg></div></div>
<div class="c" style="left:20px;top:353.3px;width:51.3px;height:32px;background:#fff;border-right:1px solid #e4e4e4;border-bottom:1px solid #e4e4e4;"><span class="x n" style="left:0;right:0;text-align:center;">6</span></div>
<div class="c" style="left:71.3px;top:353.3px;width:100px;height:32px;background:#fff;border-right:1px solid #e4e4e4;border-bottom:1px solid #e4e4e4;"></div>
<div class="c" style="left:171.3px;top:353.3px;width:160.1px;height:32px;background:#fff;border-right:1px solid #e4e4e4;border-bottom:1px solid #e4e4e4;"></div>
<div class="c" style="left:331.4px;top:353.3px;width:100.1px;height:32px;background:#fff;border-right:1px solid #e4e4e4;border-bottom:1px solid #e4e4e4;"></div>
<div class="c" style="left:431.5px;top:353.3px;width:100.2px;height:32px;background:#fff;border-right:1px solid #e4e4e4;border-bottom:1px solid #e4e4e4;"></div>
<div class="c" style="left:531.7px;top:353.3px;width:100.2px;height:32px;background:#fff;border-right:1px solid #e4e4e4;border-bottom:1px solid #e4e4e4;"></div>
<div class="c" style="left:631.9px;top:353.3px;width:100.1px;height:32px;background:#fff;border-right:1px solid #e4e4e4;border-bottom:1px solid #e4e4e4;"></div>
<div class="c" style="left:732px;top:353.3px;width:422.5px;height:32px;background:#fff;border-right:1px solid #e4e4e4;border-bottom:1px solid #e4e4e4;"></div>
<div class="c" style="left:1154.5px;top:353.3px;width:101.5px;height:32px;background:#fff;border-bottom:1px solid #e4e4e4;"><div class="w"><svg class="abs" style="left:31.5px;top:10.2px;width:12.5px;height:13.5px" viewBox="0 0 12 13"><path d="M0.7 3.3H11.3M4 3.1V1.4H8V3.1M1.9 3.5L2.4 12H9.6L10.1 3.5M4.8 5.6V9.8M7.2 5.6V9.8" fill="none" stroke="#555" stroke-width="1.1" stroke-linejoin="round"/></svg><svg class="abs" style="left:60.3px;top:10.9px;width:13px;height:13px" viewBox="0 0 13 13"><rect x="2.9" y="2.9" width="9.4" height="9.4" rx="1.7" fill="none" stroke="#555" stroke-width="1.1"/><path d="M2.3 10.4H2.1A1.4 1.4 0 0 1 0.7 9V2.1A1.4 1.4 0 0 1 2.1 0.7H9A1.4 1.4 0 0 1 10.4 2.1V2.3" fill="none" stroke="#555" stroke-width="1.05"/><path d="M7.6 5.4V9.8M5.4 7.6H9.8" fill="none" stroke="#555" stroke-width="1.1"/></svg></div></div>
<div class="c" style="left:20px;top:385.3px;width:51.3px;height:32px;background:#fff;border-right:1px solid #e4e4e4;border-bottom:1px solid #e4e4e4;"><span class="x n" style="left:0;right:0;text-align:center;">7</span></div>
<div class="c" style="left:71.3px;top:385.3px;width:100px;height:32px;background:#fff;border-right:1px solid #e4e4e4;border-bottom:1px solid #e4e4e4;"></div>
<div class="c" style="left:171.3px;top:385.3px;width:160.1px;height:32px;background:#fff;border-right:1px solid #e4e4e4;border-bottom:1px solid #e4e4e4;"></div>
<div class="c" style="left:331.4px;top:385.3px;width:100.1px;height:32px;background:#fff;border-right:1px solid #e4e4e4;border-bottom:1px solid #e4e4e4;"></div>
<div class="c" style="left:431.5px;top:385.3px;width:100.2px;height:32px;background:#fff;border-right:1px solid #e4e4e4;border-bottom:1px solid #e4e4e4;"></div>
<div class="c" style="left:531.7px;top:385.3px;width:100.2px;height:32px;background:#fff;border-right:1px solid #e4e4e4;border-bottom:1px solid #e4e4e4;"></div>
<div class="c" style="left:631.9px;top:385.3px;width:100.1px;height:32px;background:#fff;border-right:1px solid #e4e4e4;border-bottom:1px solid #e4e4e4;"></div>
<div class="c" style="left:732px;top:385.3px;width:422.5px;height:32px;background:#fff;border-right:1px solid #e4e4e4;border-bottom:1px solid #e4e4e4;"></div>
<div class="c" style="left:1154.5px;top:385.3px;width:101.5px;height:32px;background:#fff;border-bottom:1px solid #e4e4e4;"><div class="w"><svg class="abs" style="left:31.5px;top:10.2px;width:12.5px;height:13.5px" viewBox="0 0 12 13"><path d="M0.7 3.3H11.3M4 3.1V1.4H8V3.1M1.9 3.5L2.4 12H9.6L10.1 3.5M4.8 5.6V9.8M7.2 5.6V9.8" fill="none" stroke="#555" stroke-width="1.1" stroke-linejoin="round"/></svg><svg class="abs" style="left:60.3px;top:10.9px;width:13px;height:13px" viewBox="0 0 13 13"><rect x="2.9" y="2.9" width="9.4" height="9.4" rx="1.7" fill="none" stroke="#555" stroke-width="1.1"/><path d="M2.3 10.4H2.1A1.4 1.4 0 0 1 0.7 9V2.1A1.4 1.4 0 0 1 2.1 0.7H9A1.4 1.4 0 0 1 10.4 2.1V2.3" fill="none" stroke="#555" stroke-width="1.05"/><path d="M7.6 5.4V9.8M5.4 7.6H9.8" fill="none" stroke="#555" stroke-width="1.1"/></svg></div></div>
<div class="c" style="left:20px;top:417.3px;width:51.3px;height:32px;background:#fff;border-right:1px solid #e4e4e4;border-bottom:1px solid #e4e4e4;"><span class="x n" style="left:0;right:0;text-align:center;">8</span></div>
<div class="c" style="left:71.3px;top:417.3px;width:100px;height:32px;background:#fff;border-right:1px solid #e4e4e4;border-bottom:1px solid #e4e4e4;"></div>
<div class="c" style="left:171.3px;top:417.3px;width:160.1px;height:32px;background:#fff;border-right:1px solid #e4e4e4;border-bottom:1px solid #e4e4e4;"></div>
<div class="c" style="left:331.4px;top:417.3px;width:100.1px;height:32px;background:#fff;border-right:1px solid #e4e4e4;border-bottom:1px solid #e4e4e4;"></div>
<div class="c" style="left:431.5px;top:417.3px;width:100.2px;height:32px;background:#fff;border-right:1px solid #e4e4e4;border-bottom:1px solid #e4e4e4;"></div>
<div class="c" style="left:531.7px;top:417.3px;width:100.2px;height:32px;background:#fff;border-right:1px solid #e4e4e4;border-bottom:1px solid #e4e4e4;"></div>
<div class="c" style="left:631.9px;top:417.3px;width:100.1px;height:32px;background:#fff;border-right:1px solid #e4e4e4;border-bottom:1px solid #e4e4e4;"></div>
<div class="c" style="left:732px;top:417.3px;width:422.5px;height:32px;background:#fff;border-right:1px solid #e4e4e4;border-bottom:1px solid #e4e4e4;"></div>
<div class="c" style="left:1154.5px;top:417.3px;width:101.5px;height:32px;background:#fff;border-bottom:1px solid #e4e4e4;"><div class="w"><svg class="abs" style="left:31.5px;top:10.2px;width:12.5px;height:13.5px" viewBox="0 0 12 13"><path d="M0.7 3.3H11.3M4 3.1V1.4H8V3.1M1.9 3.5L2.4 12H9.6L10.1 3.5M4.8 5.6V9.8M7.2 5.6V9.8" fill="none" stroke="#555" stroke-width="1.1" stroke-linejoin="round"/></svg><svg class="abs" style="left:60.3px;top:10.9px;width:13px;height:13px" viewBox="0 0 13 13"><rect x="2.9" y="2.9" width="9.4" height="9.4" rx="1.7" fill="none" stroke="#555" stroke-width="1.1"/><path d="M2.3 10.4H2.1A1.4 1.4 0 0 1 0.7 9V2.1A1.4 1.4 0 0 1 2.1 0.7H9A1.4 1.4 0 0 1 10.4 2.1V2.3" fill="none" stroke="#555" stroke-width="1.05"/><path d="M7.6 5.4V9.8M5.4 7.6H9.8" fill="none" stroke="#555" stroke-width="1.1"/></svg></div></div>
<div class="c" style="left:20px;top:449.3px;width:51.3px;height:8.4px;background:#fff;border-right:1px solid #e4e4e4;"></div>
<div class="c" style="left:71.3px;top:449.3px;width:100px;height:8.4px;background:#fff;border-right:1px solid #e4e4e4;"></div>
<div class="c" style="left:171.3px;top:449.3px;width:160.1px;height:8.4px;background:#fff;border-right:1px solid #e4e4e4;"></div>
<div class="c" style="left:331.4px;top:449.3px;width:100.1px;height:8.4px;background:#fff;border-right:1px solid #e4e4e4;"></div>
<div class="c" style="left:431.5px;top:449.3px;width:100.2px;height:8.4px;background:#fff;border-right:1px solid #e4e4e4;"></div>
<div class="c" style="left:531.7px;top:449.3px;width:100.2px;height:8.4px;background:#fff;border-right:1px solid #e4e4e4;"></div>
<div class="c" style="left:631.9px;top:449.3px;width:100.1px;height:8.4px;background:#fff;border-right:1px solid #e4e4e4;"></div>
<div class="c" style="left:732px;top:449.3px;width:422.5px;height:8.4px;background:#fff;border-right:1px solid #e4e4e4;"></div>
<div class="c" style="left:1154.5px;top:449.3px;width:101.5px;height:8.4px;background:#fff;"></div>
<div class="abs" style="left:20px;top:161px;width:1236px;height:0.9px;background:#e8eaec"></div>
<div class="abs" style="left:20px;top:193.3px;width:1px;height:264px;background:#e4e4e4"></div>
<div class="abs" style="left:1248px;top:194.3px;width:8px;height:108px;border-radius:4px;background:rgba(110,110,110,.55)"></div>
<div class="c" style="left:20px;top:457.5px;width:51.3px;height:32px;background:#fef2e5;border-bottom:1px solid #eadfd3;border-top:1px solid #eadfd3;"><span class="x" style="left:0;right:0;text-align:center;">小计</span><span class="abs" style="left:49px;top:0;bottom:0;width:2.2px;background:#cfc5ba"></span></div>
<div class="c" style="left:71.3px;top:457.5px;width:100px;height:32px;background:#fef2e5;border-right:1px solid #eadfd3;border-bottom:1px solid #eadfd3;border-top:1px solid #eadfd3;"></div>
<div class="c" style="left:171.3px;top:457.5px;width:160.1px;height:32px;background:#fef2e5;border-right:1px solid #eadfd3;border-bottom:1px solid #eadfd3;border-top:1px solid #eadfd3;"></div>
<div class="c" style="left:331.4px;top:457.5px;width:100.1px;height:32px;background:#fef2e5;border-right:1px solid #eadfd3;border-bottom:1px solid #eadfd3;border-top:1px solid #eadfd3;"></div>
<div class="c" style="left:431.5px;top:457.5px;width:100.2px;height:32px;background:#fef2e5;border-right:1px solid #eadfd3;border-bottom:1px solid #eadfd3;border-top:1px solid #eadfd3;"></div>
<div class="c" style="left:531.7px;top:457.5px;width:100.2px;height:32px;background:#fef2e5;border-right:1px solid #eadfd3;border-bottom:1px solid #eadfd3;border-top:1px solid #eadfd3;"><div class="w"><span class="x n" style="right:11px;font-weight:bold;font-size:13.3px !important;">216.00</span></div></div>
<div class="c" style="left:631.9px;top:457.5px;width:100.1px;height:32px;background:#fef2e5;border-right:1px solid #eadfd3;border-bottom:1px solid #eadfd3;border-top:1px solid #eadfd3;"></div>
<div class="c" style="left:732px;top:457.5px;width:422.5px;height:32px;background:#fef2e5;border-right:1px solid #eadfd3;border-bottom:1px solid #eadfd3;border-top:1px solid #eadfd3;"><div class="w"><span class="x n" style="right:10.5px;font-weight:bold;font-size:13.3px !important;">0.00</span></div></div>
<div class="c" style="left:1154.5px;top:457.5px;width:101.5px;height:32px;background:#fef2e5;border-bottom:1px solid #eadfd3;border-top:1px solid #eadfd3;"></div>
</div>

<div id="remark">
  <div class="abs" style="left:20px;top:29.5px;font-size:12px;line-height:20px;color:#484848">备注信息</div>
  <div class="abs" style="left:87px;top:0;width:1px;height:75px;background:#e6e6e6"></div>
  <div class="abs" style="left:103px;top:20px;width:1063px;height:30px;border-bottom:2px solid #fcc9a6"></div>
  <div class="abs" style="left:103px;top:25.5px;width:1px;height:17px;background:#555"></div>
  <div class="abs" style="left:104px;top:26px;font-size:12px;line-height:20px;color:#c6c6c6">请输入备注信息</div>
</div>

<div id="sbar"></div>

<div id="foot">
  <div class="abs" style="left:1028px;top:8px;width:82px;height:36.5px;border:1px solid #ccc;border-radius:4px;background:#fff;font-size:16px;line-height:34px;text-align:center;color:#333">放弃</div>
  <div class="abs" style="left:1122px;top:7px;width:142px;height:35.3px;border-radius:4px;background:#ff8b3d;font-size:16px;line-height:35.3px;color:#fff;padding-left:46.5px">保存</div>
  <svg class="abs" style="left:1204.8px;top:22.5px;width:11px;height:7px" viewBox="0 0 11 7"><path d="M0.8 6.2L5.5 1.2L10.2 6.2" stroke="#fff" stroke-width="1.2" fill="none"/></svg>
</div>

<div class="abs" style="left:1331px;top:197px;width:35px;height:39px;background:#fff;box-shadow:-1px 0 6px rgba(0,0,0,.18)"></div>
<svg class="abs" style="left:1338px;top:205px;width:21px;height:21px" viewBox="0 0 24 24" fill="none" stroke="#555" stroke-width="1.6" stroke-linecap="round" stroke-linejoin="round"><path d="M21.44 11.05l-9.19 9.19a6 6 0 0 1-8.49-8.49l9.19-9.19a4 4 0 0 1 5.66 5.66l-9.2 9.19a2 2 0 0 1-2.83-2.83l8.49-8.48"/></svg>
<div class="abs" style="left:1331px;top:236px;width:35px;height:37px;background:#03b7ac"></div>
<svg class="abs" style="left:1338px;top:244px;width:21px;height:21px" viewBox="0 0 21 21" fill="none" stroke="#fff" stroke-width="1.35" stroke-linecap="round" stroke-linejoin="round"><rect x="1.2" y="1.2" width="18.6" height="18.6" rx="1.6"/><path d="M12 9L16.2 4.8M12.8 4.8H16.2V8.2M9 12L4.8 16.2M4.8 12.8V16.2H8.2"/></svg>

<div class="abs" style="left:66px;top:690px;font-size:25px;line-height:34px;font-weight:900;color:#fff;-webkit-text-stroke:0.7px #fff;letter-spacing:3px;white-space:nowrap;text-shadow:0 0 4px rgba(0,0,0,.5),0 0 2px rgba(0,0,0,.35),0 1px 2px rgba(0,0,0,.2)">大数跨境</div>
<svg class="abs" style="left:8px;top:684px;width:60px;height:44px;overflow:visible" viewBox="0 0 60 44"><defs><filter id="ws" x="-20%" y="-20%" width="140%" height="140%"><feDropShadow dx="0" dy="0" stdDeviation="1.4" flood-color="#000" flood-opacity=".6"/></filter></defs><g filter="url(#ws)" fill="none" stroke="#fff" stroke-linejoin="round"><path d="M3.6 18L8.9 11.5V35" stroke-width="5.6"/><path d="M19.9 14.6A10.5 10.5 0 1 0 33.96 23.6" stroke-width="5.4" stroke-linecap="round"/><circle cx="30.6" cy="10.3" r="4.6" stroke-width="2.3"/><circle cx="43.8" cy="12.4" r="6.2" stroke-width="2.3"/></g></svg>
<div class="abs" style="left:0;top:729.5px;width:1366px;height:2px;background:#9a9a9a"></div>
<div class="abs" style="left:32px;top:729.5px;width:228px;height:2px;background:#d9d9d9"></div>

</div>
</body>
</html>
